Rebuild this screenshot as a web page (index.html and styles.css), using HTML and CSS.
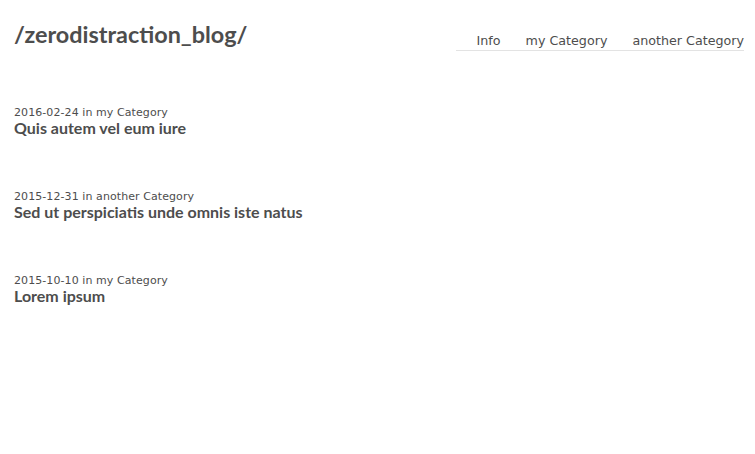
FILE: index.html
```html
<!DOCTYPE html>
<html>
<head>
<meta charset="utf-8">
<link rel="stylesheet" href="styles.css">
</head>
<body>
<header class="header">
  <h1 class="site-title">/zerodistraction_blog/</h1>
  <nav class="nav">
    <a class="nav-link" href="#">Info</a>
    <a class="nav-link" href="#">my Category</a>
    <a class="nav-link" href="#">another Category</a>
  </nav>
</header>
<main class="posts">
  <article class="post">
    <div class="meta">2016-02-24 in my Category</div>
    <h2 class="post-title">Quis autem vel eum iure</h2>
  </article>
  <article class="post">
    <div class="meta">2015-12-31 in another Category</div>
    <h2 class="post-title">Sed ut perspiciatis unde omnis iste natus</h2>
  </article>
  <article class="post">
    <div class="meta">2015-10-10 in my Category</div>
    <h2 class="post-title">Lorem ipsum</h2>
  </article>
</main>
</body>
</html>
```
FILE: styles.css
```css
html, body {
  margin: 0;
  padding: 0;
  background: #fff;
  color: #4d4d4d;
}
body {
  padding: 0 11px 0 14px;
}
.header {
  display: flex;
  justify-content: space-between;
  align-items: flex-start;
  padding-top: 19px;
}
.site-title {
  margin: 0;
  font-family: Lato, sans-serif;
  font-weight: 700;
  font-size: 23.4px;
  line-height: 30px;
  color: #4d4d4d;
}
.nav {
  display: flex;
  gap: 25px;
  margin-top: 14px;
  padding: 0 0 1px 21px;
  border-bottom: 1px solid #e3e3e3;
}
.nav-link {
  font-family: "DejaVu Sans", sans-serif;
  font-size: 12.7px;
  line-height: 16px;
  color: #4d4d4d;
  text-decoration: none;
}
.posts {
  margin-top: 55px;
}
.post {
  margin-bottom: 54px;
}
.meta {
  font-family: "DejaVu Sans", sans-serif;
  font-size: 11px;
  line-height: 13px;
  letter-spacing: 0.08px;
  color: #4d4d4d;
}
.post-title {
  margin: 0;
  font-family: Lato, sans-serif;
  font-weight: 700;
  font-size: 16px;
  line-height: 17px;
  color: #4d4d4d;
}
```
